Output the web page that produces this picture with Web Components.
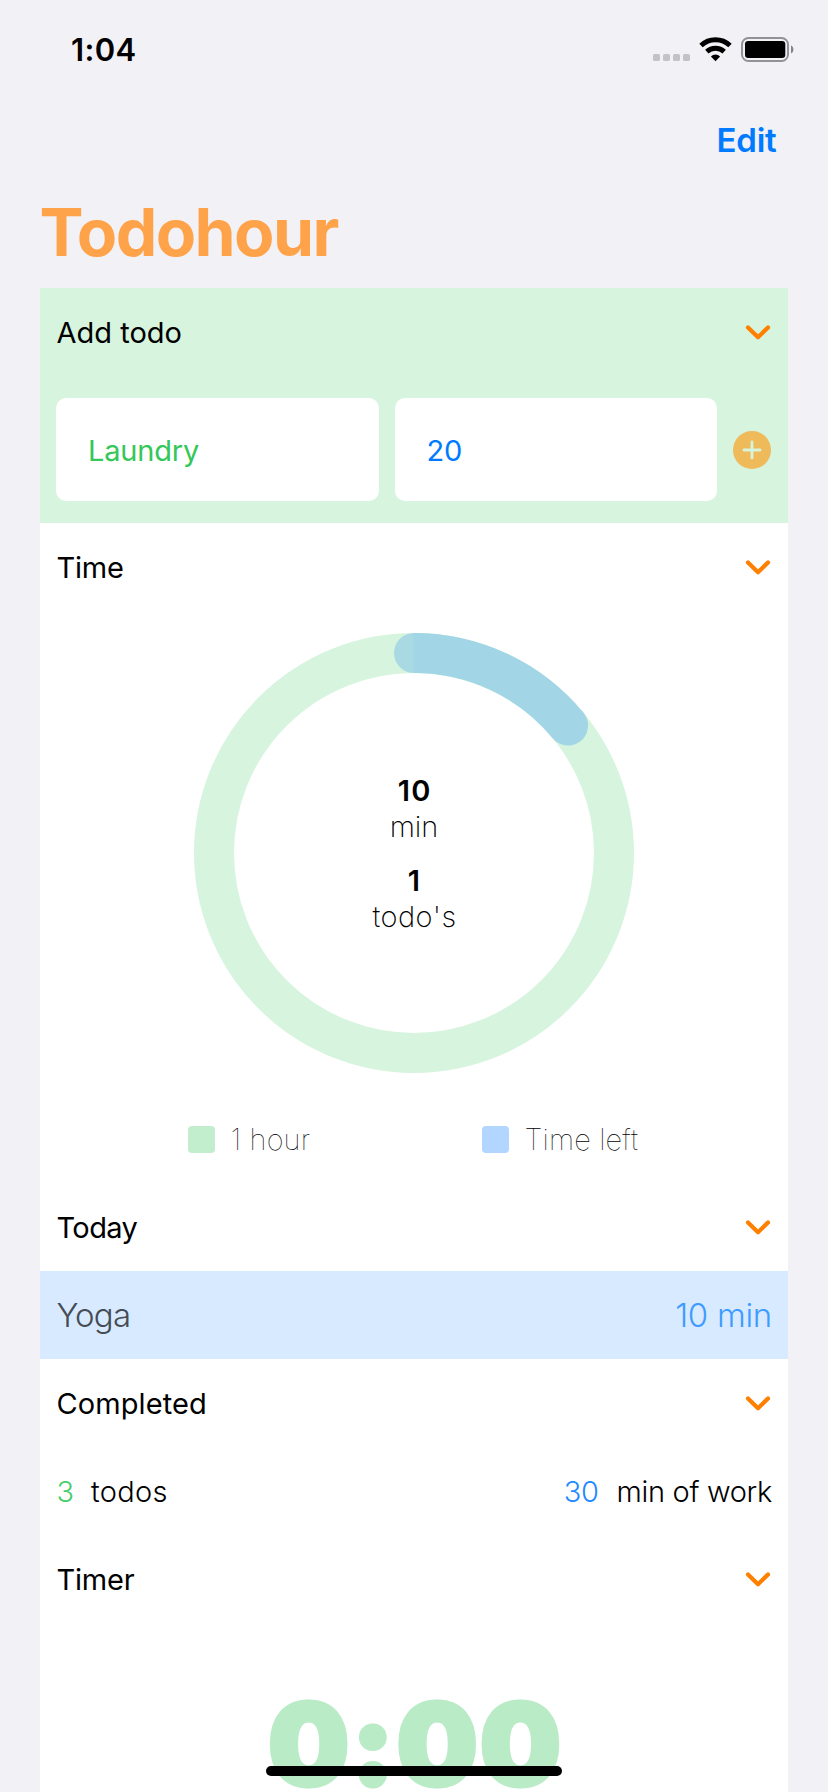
<!DOCTYPE html>
<html lang="en">
<head>
<meta charset="utf-8">
<title>Todohour</title>
<style>
html,body{margin:0;height:1792px;overflow:hidden;background:#f2f1f6}
body{font-family:Inter,"Liberation Sans",sans-serif;color:#000}
</style>
</head>
<body>
<todo-app></todo-app>
<script>
const define = (name, html) => customElements.define(name, class extends HTMLElement {
  connectedCallback() {
    if (this.shadowRoot) return;
    const t = document.createElement('template');
    t.innerHTML = html;
    this.attachShadow({ mode: 'open' }).append(t.content.cloneNode(true));
  }
});

define('status-bar', `<style>
:host{display:flex;justify-content:space-between;align-items:center;height:100px;padding:0 34px 0 71px;box-sizing:border-box}
time{font-size:31px;font-weight:600;letter-spacing:.35px;margin-bottom:2px}
svg{display:block;margin-bottom:2px}
</style>
<time>1:04</time>
<svg width="142" height="28" viewBox="652 35 142 28">
  <g fill="#c3c2c7"><rect x="653" y="54" width="7" height="7" rx="1.6"/><rect x="663" y="54" width="7" height="7" rx="1.6"/><rect x="673" y="54" width="7" height="7" rx="1.6"/><rect x="683" y="54" width="7" height="7" rx="1.6"/></g>
  <g fill="none" stroke="#000" stroke-width="4.9"><path d="M701 45.6a21 21 0 0 1 29 0"/><path d="M706.8 51.600a12.800 12.800 0 0 1 17.400 0"/></g>
  <path d="M710.900 56.400a6.800 6.800 0 0 1 9.200 0L715.500 61.200z"/>
  <rect x="742" y="38" width="46" height="23" rx="6.500" fill="none" stroke="#939297" stroke-width="2"/>
  <rect x="745" y="41" width="40.300" height="17" rx="3.300"/>
  <path d="M791 45.300a4.600 4.600 0 0 1 0 8.200z" fill="#858489"/>
</svg>`);

define('nav-bar', `<style>
:host{display:block}
.bar{height:80px;display:flex;align-items:center;justify-content:flex-end;padding-right:51.500px;color:#007aff;font-size:33px;font-weight:600;letter-spacing:-.24px}
h1{margin:0;height:108px;line-height:104px;padding-left:39.500px;font-size:66px;font-weight:700;letter-spacing:-1.600px;color:#ffa34b;box-sizing:border-box}
</style>
<div class="bar"><slot name="action"></slot></div>
<h1><slot></slot></h1>`);

define('todo-section', `<style>
:host{display:block}
header{display:flex;align-items:center;justify-content:space-between;height:88px;padding:0 17.500px 0 16.500px;font-size:29px}
</style>
<header><slot name="title"></slot>
<svg width="26" height="18" viewBox="0 0 26 18"><path d="M3 4.400L13 14.200L23 4.400" fill="none" stroke="#ff8000" stroke-width="4.200" stroke-linecap="round" stroke-linejoin="round"/></svg></header>
<slot></slot>`);

define('todo-form', `<style>
:host{display:flex;align-items:flex-start;height:147px;padding:22px 17px 0 16px;box-sizing:border-box;gap:16px}
.field{flex:1;height:103px;background:#fff;border-radius:10px;display:flex;align-items:center;padding:1px 0 0 32px;box-sizing:border-box;font-size:29px;letter-spacing:-.2px}
.name{color:#34c759}.mins{color:#007aff}
svg{display:block;margin-top:33px}
</style>
<div class="field name"><slot name="name"></slot></div>
<div class="field mins"><slot name="mins"></slot></div>
<svg width="38" height="38" viewBox="0 0 38 38"><circle cx="19" cy="19" r="19" fill="#efba5a"/><path d="M19 11v16M11 19h16" stroke="#d6f4de" stroke-width="2.800" stroke-linecap="round"/></svg>`);

define('time-ring', `<style>
:host{display:grid;justify-content:center;padding-top:22px}
svg,.label{grid-area:1/1}
svg{display:block}
.label{display:flex;flex-direction:column;justify-content:center;align-items:center;font-size:29px;line-height:36px;padding-top:2px}
b{font-weight:600}.two{letter-spacing:1.200px;margin-right:-1.200px}
span{font-weight:200}
.todo{margin-top:18px}.wide{letter-spacing:.44px;margin-left:1px}
</style>
<svg width="440" height="440" viewBox="0 0 440 440">
  <circle cx="220" cy="220" r="200" fill="none" stroke="#d7f4df" stroke-width="40"/>
  <path d="M220 0a20 20 0 0 0 0 40z" fill="#a9dae4"/>
  <path d="M219.500 20A200 200 0 0 1 374.100 92.500" fill="none" stroke="#a2d6e6" stroke-width="40"/>
  <circle cx="374.100" cy="92.500" r="20" fill="#a2d6e6"/>
</svg>
<div class="label"><b class="two">10</b><span>min</span><b class="todo">1</b><span class="wide">todo's</span></div>`);

define('ring-legend', `<style>
:host{display:grid;grid-template-columns:294px 294px;height:110px;padding:40px 0 0 148px;box-sizing:border-box;font-size:29px;font-weight:100}
div{display:flex;align-items:center;height:53px;gap:15.500px;letter-spacing:.14px}
div:first-child{letter-spacing:.41px}
i{width:27px;height:27px;border-radius:4px;background:#c2eecd}
.left{background:#b2d6ff}
</style>
<div><i></i><span>1 hour</span></div><div><i class="left"></i><span>Time left</span></div>`);

define('todo-row', `<style>
:host{display:flex;align-items:center;justify-content:space-between;height:88px;padding:0 16px 0 16.500px;box-sizing:border-box;font-weight:300}
</style><slot></slot>`);

define('todo-timer', `<style>
:host{display:block;height:169px;padding-top:75.500px;box-sizing:border-box;text-align:center}
div{padding-left:4px;line-height:90px;font-size:113px;font-weight:900;letter-spacing:3px;color:#b8ebc6;-webkit-text-stroke:5px #b8ebc6}
</style><div><slot></slot></div>`);

define('home-indicator', `<style>
:host{position:absolute;left:266px;top:1766px;width:296px;height:10px;border-radius:5px;background:#000}
</style>`);

define('todo-app', `<style>
:host{display:block;height:1792px;overflow:hidden;position:relative}
main{margin:0 40px;background:#fff}
.add{background:#d6f4de}
.row-yoga{background:#d8eaff;font-size:33px}
.yoga{color:#464c53;letter-spacing:-.83px}
.ym{color:#409bff;letter-spacing:-.29px}
.done{font-size:29px}
.done span{display:flex;gap:17px}
.done span+span{gap:18px}
.g{color:#48cd6a}.b{color:#1f8aff;letter-spacing:-.3px}
.tl{letter-spacing:.3px}.wk{letter-spacing:-.32px}
</style>
<status-bar></status-bar>
<nav-bar><span slot="action">Edit</span>Todohour</nav-bar>
<main>
  <todo-section class="add"><span slot="title">Add todo</span>
    <todo-form><span slot="name">Laundry</span><span slot="mins">20</span></todo-form>
  </todo-section>
  <todo-section><span slot="title" style="letter-spacing:-.22px">Time</span>
    <time-ring></time-ring><ring-legend></ring-legend>
  </todo-section>
  <todo-section><span slot="title" style="letter-spacing:-.6px">Today</span>
    <todo-row class="row-yoga"><span class="yoga">Yoga</span><span class="ym">10 min</span></todo-row>
  </todo-section>
  <todo-section><span slot="title" style="letter-spacing:.09px">Completed</span>
    <todo-row class="done"><span><span class="g">3</span><span class="tl">todos</span></span><span><span class="b">30</span><span class="wk">min of work</span></span></todo-row>
  </todo-section>
  <todo-section><span slot="title" style="letter-spacing:-.2px">Timer</span>
    <todo-timer>0:00</todo-timer>
  </todo-section>
</main>
<home-indicator></home-indicator>`);
</script>
</body>
</html>
